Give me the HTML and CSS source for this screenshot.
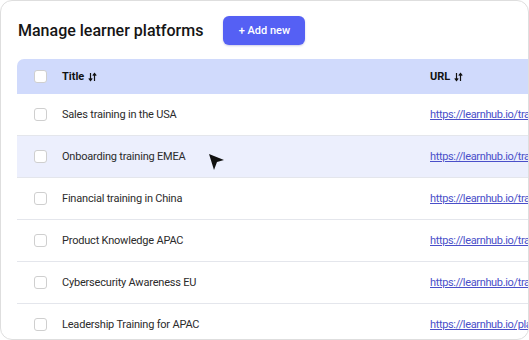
FILE: index.html
```html
<!DOCTYPE html>
<html>
<head>
<meta charset="utf-8">
<link rel="stylesheet" href="styles.css">
</head>
<body>
<div class="card">
  <div class="top">
    <h1 class="title">Manage learner platforms</h1>
    <button class="add">+ Add new</button>
  </div>
  <div class="table">
    <div class="row head">
      <span class="cb"></span>
      <span class="c-title">Title <svg class="sort" width="9" height="10" viewBox="0 0 9 10"><path d="M2.5 1v7.5M0.8 6.3l1.7 2.2 1.7-2.2M6.5 9V1.5M4.8 3.7l1.7-2.2 1.7 2.2" fill="none" stroke="#111" stroke-width="1.2"/></svg></span>
      <span class="c-url">URL <svg class="sort" width="9" height="10" viewBox="0 0 9 10"><path d="M2.5 1v7.5M0.8 6.3l1.7 2.2 1.7-2.2M6.5 9V1.5M4.8 3.7l1.7-2.2 1.7 2.2" fill="none" stroke="#111" stroke-width="1.2"/></svg></span>
    </div>
    <div class="row"><span class="cb"></span><span class="c-title">Sales training in the USA</span><span class="c-url"><a href="#">https://learnhub.io/tra</a></span></div>
    <div class="row hover"><span class="cb"></span><span class="c-title">Onboarding training EMEA</span><span class="c-url"><a href="#">https://learnhub.io/tra</a></span>
      <svg class="cursor" width="17" height="18" viewBox="0 0 17 18"><polygon points="1,1 16,7 9,9 6,17" fill="#111"/></svg>
    </div>
    <div class="row"><span class="cb"></span><span class="c-title">Financial training in China</span><span class="c-url"><a href="#">https://learnhub.io/tra</a></span></div>
    <div class="row"><span class="cb"></span><span class="c-title">Product Knowledge APAC</span><span class="c-url"><a href="#">https://learnhub.io/tra</a></span></div>
    <div class="row"><span class="cb"></span><span class="c-title">Cybersecurity Awareness EU</span><span class="c-url"><a href="#">https://learnhub.io/tra</a></span></div>
    <div class="row"><span class="cb"></span><span class="c-title">Leadership Training for APAC</span><span class="c-url"><a href="#">https://learnhub.io/pla</a></span></div>
  </div>
</div>
</body>
</html>
```
FILE: styles.css
```css
* { box-sizing: border-box; }
html, body { margin: 0; padding: 0; background: #fff; }
body { font-family: Roboto, "Noto Sans", sans-serif; color: #2b2b2b; }
.card {
  width: 529px;
  height: 340px;
  border: 1px solid #dedede;
  border-radius: 12px;
  overflow: hidden;
  background: #fff;
  padding: 14px 0 0 16px;
}
.top { display: flex; align-items: center; gap: 20px; height: 30px; }
.title { margin: 0 0 0 1px; font-size: 16px; font-weight: 500; color: #151515; }
.add {
  width: 82px; height: 29px;
  border: none; border-radius: 6px;
  background: #5560f4; color: #fff;
  font-family: Roboto, sans-serif; font-size: 11px; font-weight: 500;
  box-shadow: 0 1px 2px rgba(60,60,160,0.25);
}
.table { margin-top: 14px; width: 560px; }
.row {
  position: relative;
  display: flex; align-items: center;
  height: 42px;
  border-bottom: 1px solid #e4e6ec;
  font-size: 11px;
  white-space: nowrap;
}
.row.head {
  height: 35px;
  background: #d0dafc;
  border-bottom: none;
  border-top-left-radius: 7px;
  font-weight: 700;
  color: #111;
}
.row.hover { background: #eceffd; }
.cb {
  width: 13px; height: 13px;
  margin-left: 17px; margin-right: 15px;
  border: 1px solid #cfcfcf; border-radius: 3px; background: #fff;
  flex: none;
}
.c-title { width: 368px; flex: none; letter-spacing: -0.2px; }
.head .c-title, .head .c-url { letter-spacing: 0; display: flex; align-items: center; }
.c-url { flex: none; }
.c-url a { color: #4a4fc9; text-decoration: underline; letter-spacing: -0.35px; }
.sort { margin-left: 4px; }
.cursor { position: absolute; left: 191px; top: 17px; }
```
